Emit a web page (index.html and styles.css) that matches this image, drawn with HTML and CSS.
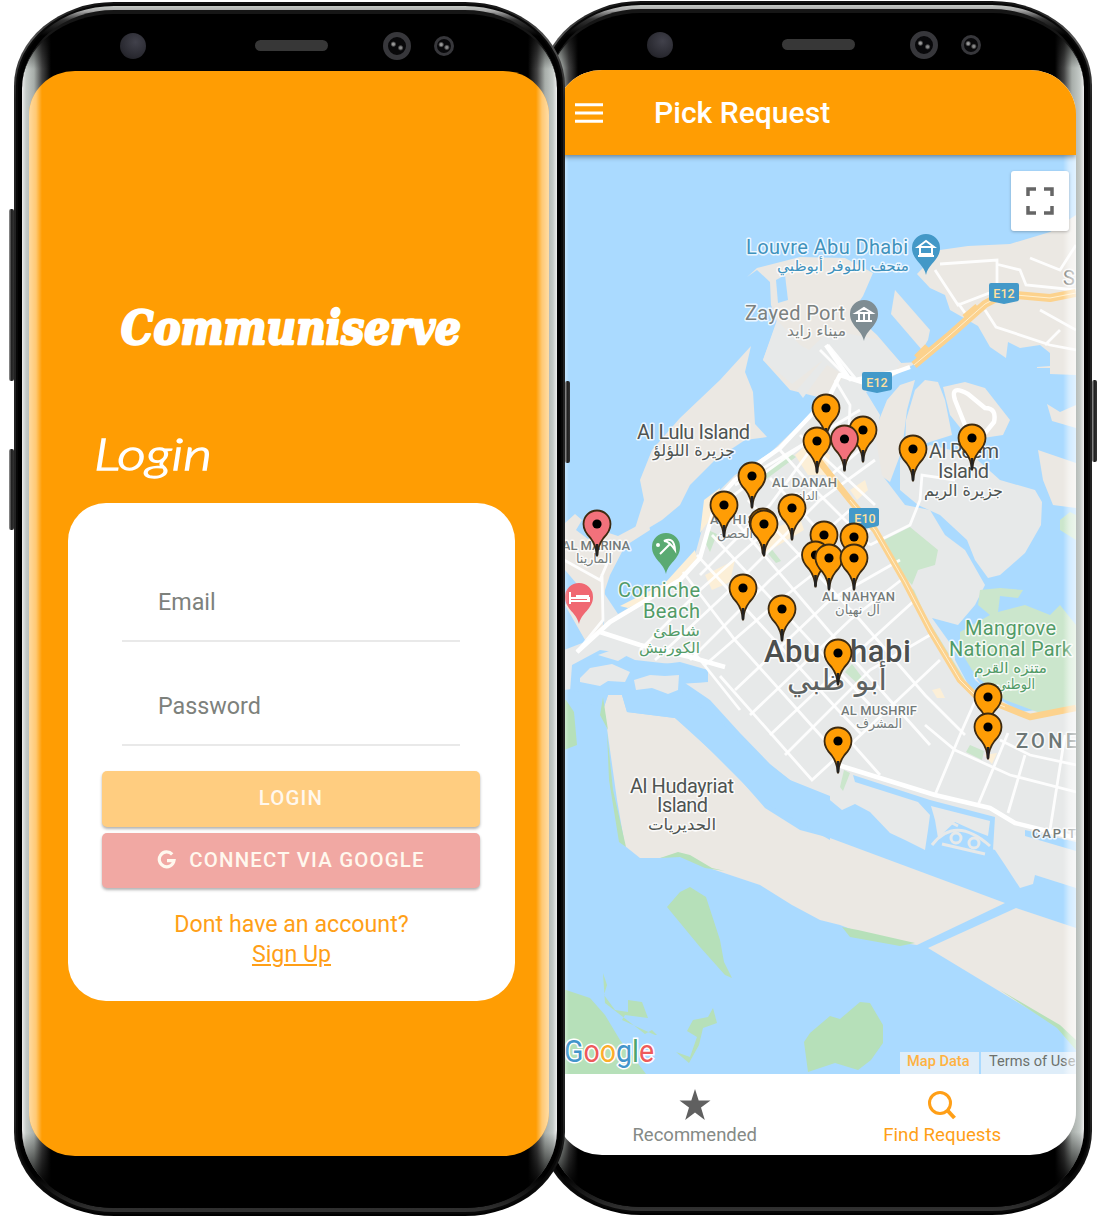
FILE: index.html
```html
<!DOCTYPE html>
<html lang="en">
<head>
<meta charset="utf-8">
<title>Communiserve</title>
<link rel="stylesheet" href="styles.css">
</head>
<body>
<main class="stage">
  <section class="phone phone-front">
    <i class="key key-volume"></i><i class="key key-assist"></i><i class="key key-power"></i>
    <div class="rim"><div class="glass">
      <div class="sensors"><i class="iris"></i><i class="speaker"></i><i class="camera"></i><i class="camera small"></i></div>
      <div class="screen login">
        <svg class="brand" width="350" height="60" viewBox="0 0 350 60"><text x="4" y="47" textLength="340" lengthAdjust="spacingAndGlyphs">Communiserve</text></svg>
        <svg class="heading" width="130" height="64" viewBox="0 0 130 64"><text x="2" y="42" textLength="118" lengthAdjust="spacingAndGlyphs">Login</text></svg>
        <form class="card">
          <label class="field">Email</label>
          <label class="field">Password</label>
          <button type="button" class="btn btn-login">LOGIN</button>
          <button type="button" class="btn btn-google">
            <svg width="19" height="20" viewBox="0 0 19 20"><path d="M15.2 4.4A7.4 7.4 0 1 0 17 10.6H10" fill="none" stroke="currentColor" stroke-width="3.2"/></svg>
            <span>CONNECT VIA GOOGLE</span>
          </button>
          <p class="signup">Dont have an account?<br><a>Sign Up</a></p>
        </form>
      </div>
      <div class="chin"></div>
    </div></div>
  </section>

  <section class="phone phone-back">
    <i class="key key-power"></i>
    <div class="rim"><div class="glass">
      <div class="sensors"><i class="iris"></i><i class="speaker"></i><i class="camera"></i><i class="camera small"></i></div>
      <div class="screen finder">
        <header class="appbar">
          <svg width="28" height="20" viewBox="0 0 28 20"><path d="M0 1.8H28M0 10H28M0 18.2H28" stroke="#fff" stroke-width="3"/></svg>
          <h1>Pick Request</h1>
        </header>
        <div class="map">
          <svg width="520" height="919" viewBox="556 155 520 919">
            <defs>
              <g id="pin"><path d="M0 32.5C-.6 24-2.600 19-6.500 14C-10.500 10-13.500 6-13.500 0A13.500 13.500 0 0 1 13.500 0C13.500 6 10.500 10 6.500 14C2.600 19 .6 24 0 32.500Z" stroke="#3d2a10" stroke-width="1.800"/><path d="M0 20V31.500" stroke="#222" stroke-width="2.600"/><circle r="4.600" fill="#000"/></g>
              <path id="poi" d="M0 27C-2 16-14 12-14 0A14 14 0 0 1 14 0C14 12 2 16 0 27Z"/>
              <path id="shield" d="M-15-8Q-15-10-13-10H13Q15-10 15-8V6Q15 8 12 8.500L0 11L-12 8.500Q-15 8-15 6Z"/>
            </defs>
            <rect x="556" y="155" width="520" height="919" fill="#aadaff"/>

            <!-- islands and mainland -->
            <g class="sand">
              <path d="M747 277L757 268L800 257L845 258L873 273L863 296L852 312L877 335L901 363L918 362L890 378L850 380L830 400L790 390L763 360L777 322L771 305L770 282L757 270Z"/>
              <path d="M895 290L930 330L928 340L922 350L891 314Z"/>
              <path d="M917 274L940 250L968 246L1010 244L1050 232L1076 215V375L1050 374V368H1037V367L1050 366V353L1040 345L1020 348L1008 342L1006 358L990 347L978 326L950 310L945 295L930 288Z"/>
              <path d="M751 346L745 372L753 392L755 424L767 437L745 440L715 460L690 485L680 505L662 520L632 538L644 500L640 480L652 450L680 418L720 380Z"/>
              <path d="M875 450L877 425L887 400L900 385L915 380L907 410L902 450L890 482L880 475Z"/>
              <path d="M915 390L925 380L938 382L945 400L952 435L905 450L906 420Z"/>
              <path d="M943 387L965 382L985 388L1010 420L1003 435L970 440L950 415Z"/>
              <path d="M1047 404L1060 412L1076 405V428L1052 421Z"/>
              <path d="M1038 450L1076 463V508L1053 505L1043 480Z"/>
              <path d="M604 707L608 695L622 695L627 712L675 718L730 768L765 808L800 830L830 838L1005 903L917 945L880 940L840 925L820 920L792 905L760 885L700 865L680 855L660 858L640 858L625 846L617 800Z"/>
              <path d="M928 948L1016 908L1076 928V1042L1060 1028Z"/>
              <path d="M565 523L575 514L582 520L576 530L588 539L600 530L618 536L648 520L650 530L625 546L610 575L605 590L603 630L585 640L565 605L582 590L565 570Z"/>
            </g>
            <g class="urban">
              <path d="M809 350L830 330L880 340L901 363L890 378L866 392L880 415L876 440L882 475L905 505L930 510L945 535L965 550L985 585L975 605L958 625L932 618L955 650L985 690L1020 712L1076 705V888L1035 875L1033 884L1020 888L1005 865L995 850L955 838L925 850L905 840L890 833L870 812L855 804L842 810L825 796L795 784L770 764L740 733L710 700L685 683L705 682L708 670L680 662L655 665L640 680L600 680L580 680L564 700V650L590 640L604 628L602 590L618 614L660 590L695 555L710 500L735 475L770 453L825 400L845 375L827 365L803 398L797 390L823 360L792 384L763 360L777 320L800 345Z"/>
              <path d="M900 460L930 445L972 455L1000 480L1035 490L1042 502L1041 525L1025 553L1000 575L988 578L975 560L967 540L940 515L918 505L900 490Z"/>
            </g>

            <!-- inlets and lagoons -->
            <g class="water">
              <path d="M776 280L785 275L788 300L778 303Z"/>
              <path d="M564 690L600 685L630 690L645 680L685 684L682 695L720 720L742 745L790 780L830 796V840L760 800L690 730L675 718L627 712L622 695L608 695L604 707L564 700Z"/>
              <path d="M572 665L600 650L620 653L635 660L680 665L708 672L708 682L680 684L660 675L640 690L610 690L570 692Z"/>
              <path d="M853 775L930 800L995 817L993 850L955 848L925 850L928 830L930 815L918 802L855 782Z"/>
              <path d="M1025 830L1076 842V851L1025 836Z"/>
              <path d="M954 639L966 655L975 680L1000 700L970 688L955 660Z"/>
            </g>
            <g class="urban">
              <path d="M580 678L590 668L612 664L630 672L625 682L608 681L600 686L580 682ZM634 680L650 675L665 676L679 675L678 690L668 694L652 688L636 690ZM598 655L612 650L628 655L618 661Z"/>
              <path d="M931 806L990 821L988 836L975 831L955 822L938 838L935 820Z"/>
            </g>
            <path d="M932 845Q955 815 990 846M942 844L985 854M942 818L958 826" class="islet"/>
            <circle cx="956" cy="838" r="5" class="islet"/><circle cx="974" cy="843" r="5" class="islet"/>

            <!-- parks -->
            <g class="park">
              <path d="M884 540L910 527L938 550L935 565L918 570L912 585L903 575Z"/>
              <path d="M980 590L1000 588L1023 590L1018 598L1000 596L998 612L1025 605L1050 615L1060 605L1076 625V705L1040 713L1005 700L975 675L960 650L960 632L990 615L978 605Z"/>
              <path d="M903 580L914 590L925 615L965 680L955 675L927 630Z"/>
              <path d="M764 475L790 453L796 457L765 480ZM705 542L708 530L717 534L710 552Z"/>
              <path d="M765 550L770 547L781 561L776 563ZM845 672L852 664L864 680L858 684ZM840 787L844 770L850 773L843 791ZM966 752L970 745L984 751L982 760Z"/>
              <path d="M1060 520L1070 512L1076 515V540L1060 530Z"/>
            </g>
            <g class="marsh">
              <path d="M556 700H566L574 712L577 745L564 750H556ZM603 697L608 730L600 715Z"/>
              <path d="M607 732L613 790L626 847L619 842L609 780Z"/>
              <path d="M667 907L680 892L690 887L706 897L720 940L724 962L732 978L725 975L700 947Z"/>
              <path d="M556 990H566L590 998L605 1015L620 1040L646 1074H556Z"/>
              <path d="M603 973L607 985L604 995L615 1010L628 1012L628 1000L642 1002L648 1018L625 1015L622 1020L655 1035L657 1035L652 1030L645 1034L605 1003Z"/>
              <path d="M687 1031L693 1020L708 1017L713 1008L717 1023L703 1028L699 1045L689 1063L676 1052L690 1057L697 1037Z"/>
              <path d="M804 1042L810 1033L830 1016L840 1019L860 1002L870 1003L883 1025V1043L871 1060L858 1070L835 1063L808 1072Z"/>
              <path d="M660 858L678 852L690 855L712 868L725 871L705 868L680 857ZM842 927L858 930L915 943L900 946L850 937ZM1000 990L1060 1025L1076 1040V1050L1057 1028Z"/>
            </g>
            <g fill="#fcefd7"><path d="M620 606L665 583L695 550L697 558L668 590L628 608ZM705 575L735 560L730 582L712 590ZM757 535L800 518L804 530L762 555ZM795 455L810 442L830 455L827 475L808 475ZM704 500L720 488L713 515L700 533ZM850 490L865 480L868 490L857 500ZM984 755L997 753L992 764ZM932 690L940 688L945 698L937 698Z"/></g>

            <!-- streets -->
            <g class="street">
              <path d="M683 572L735 640L838 755M697 555L838 710L862 735M712 535L870 705M730 515L845 650L930 745M748 500L860 620L925 695L965 735M770 478L860 575M780 450L815 490L870 545M690 647L740 710M720 676L812 780L850 745L940 660M800 435L875 505"/>
              <path d="M640 650L700 590L790 510L860 450M655 660L730 590L820 500L875 460M690 660L770 580L850 510M705 665L780 600L870 530M735 690L830 600L900 560M750 715L850 620L905 577M770 735L860 650L915 600M785 755L870 670L930 635M700 575L770 505L825 430"/>
              <path d="M735 485L860 410M720 505L810 440M835 380L850 405L848 450M820 350L850 380L900 370M828 345L855 378"/>
              <path d="M935 795L960 735L980 690M978 805L1008 733M1008 813L1025 755M1050 830L1065 735M925 725L955 750L1010 775L1076 792M1000 740L1030 755L1076 765M840 730L880 775"/>
              <path d="M870 545L910 525L920 500L922 475L955 480M602 574L603 620L577 652M564 560L600 580L612 552"/>
              <path d="M940 264L997 260V290L958 305L935 270M958 303L970 320M996 264L1020 270L1026 285L1076 290M1030 258L1060 270L1076 245M985 310L996 327L1050 345L1076 350M1076 330L1040 310M1045 345L1060 330"/>
            </g>
            <path class="road" d="M577 652L610 622L680 580L700 558L708 530L717 500L735 480L780 448L830 395L840 375L865 383L910 367M600 632L640 645L690 657L725 667M838 765L935 795L990 808L1015 823L1076 838M826 345L848 377M967 430L955 400Q950 384 968 394L985 408Q997 408 994 422L985 433"/>
            <path class="highway" d="M812 452L850 500L875 530L905 582L930 630L960 680L975 695L1005 707L1030 717L1076 708"/>
            <path class="highway wide" d="M914 365L950 335L985 304L1004 294L1050 298L1076 293M917 358L928 347M965 318L978 307"/>
            <path class="median" d="M914 365L950 335L985 304L1004 294L1050 298L1076 293M850 500L875 530L905 582L930 630L960 680L975 695L1005 707"/>

            <!-- points of interest -->
            <use href="#poi" x="926" y="248" fill="#4398c7"/><path d="M918 247L926 241L934 247ZM920 248V254H932V248M918 256H934" class="glyph"/>
            <use href="#poi" x="864" y="314" fill="#7f8d93"/><path d="M856 313L864 308L872 313ZM859 314V320M864 314V320M869 314V320M856 321H872" class="glyph"/>
            <use href="#poi" x="666" y="547" fill="#5aaa72"/><path d="M660 554L670 544M664 541Q674 536 675 550Q669 541 664 541Z" class="glyph"/><circle cx="658" cy="545" r="2" fill="#fff"/>
            <use href="#poi" x="579" y="597" fill="#f06872"/><path d="M570 592V604M570 601H589V598H571M576 596H588V601" class="glyph"/>

            <g class="route"><use href="#shield" x="1004" y="293"/><use href="#shield" x="877" y="382"/><use href="#shield" x="864" y="518"/></g>
            <g class="route-no"><text x="1004" y="298">E12</text><text x="877" y="387">E12</text><text x="865" y="523">E10</text></g>

            <!-- place names -->
            <g class="label" font-size="20">
              <g fill="#3f92bd"><text x="746" y="254" textLength="162">Louvre Abu Dhabi</text><text class="ar" x="777" y="271" textLength="132" lengthAdjust="spacingAndGlyphs" font-size="15">متحف اللوفر أبوظبي</text></g>
              <g fill="#7b8180"><text x="745" y="320" textLength="100">Zayed Port</text><text class="ar" x="787" y="336" textLength="59" lengthAdjust="spacingAndGlyphs" font-size="15">ميناء زايد</text></g>
              <g fill="#4e5452">
                <text x="637" y="439" textLength="113">Al Lulu Island</text><text class="ar" x="653" y="456" textLength="82" lengthAdjust="spacingAndGlyphs" font-size="16">جزيرة اللؤلؤ</text>
                <text x="929" y="458" textLength="70">Al Reem</text><text x="938" y="478" textLength="51">Island</text><text class="ar" x="924" y="496" textLength="79" lengthAdjust="spacingAndGlyphs" font-size="16">جزيرة الريم</text>
                <text x="630" y="793" textLength="104">Al Hudayriat</text><text x="657" y="812" textLength="51">Island</text><text class="ar" x="648" y="830" textLength="68" lengthAdjust="spacingAndGlyphs" font-size="16">الحديريات</text>
              </g>
              <g fill="#529b67"><text x="618" y="597" textLength="82">Corniche</text><text x="643" y="618" textLength="57">Beach</text><text class="ar" x="653" y="636" textLength="47" lengthAdjust="spacingAndGlyphs" font-size="15">شاطئ</text><text class="ar" x="639" y="653" textLength="61" lengthAdjust="spacingAndGlyphs" font-size="15">الكورنيش</text>
                <text x="965" y="635" textLength="91">Mangrove</text><text x="949" y="656" textLength="123">National Park</text><text class="ar" x="974" y="673" textLength="73" lengthAdjust="spacingAndGlyphs" font-size="15">متنزه القرم</text><text class="ar" x="996" y="689" textLength="39" lengthAdjust="spacingAndGlyphs" font-size="15">الوطني</text></g>
              <g fill="#747b7a" font-size="13" font-weight="500">
                <text x="772" y="487" textLength="65">AL DANAH</text><text class="ar" x="793" y="500" textLength="25" lengthAdjust="spacingAndGlyphs" font-size="12">الدانة</text>
                <text x="710" y="524" textLength="56">AL HISN</text><text class="ar" x="717" y="538" textLength="36" lengthAdjust="spacingAndGlyphs" font-size="13">الحصن</text>
                <text x="562" y="550" textLength="68">AL MARINA</text><text class="ar" x="576" y="563" textLength="36" lengthAdjust="spacingAndGlyphs" font-size="13">المارينا</text>
                <text x="822" y="601" textLength="73">AL NAHYAN</text><text class="ar" x="835" y="614" textLength="45" lengthAdjust="spacingAndGlyphs" font-size="13">آل نهيان</text>
                <text x="841" y="715" textLength="76">AL MUSHRIF</text><text class="ar" x="856" y="728" textLength="46" lengthAdjust="spacingAndGlyphs" font-size="13">المشرف</text>
                <text x="1032" y="838" textLength="44">CAPIT</text>
              </g>
              <text x="1063" y="285" fill="#7b8180">S</text>
              <text x="1016" y="748" font-size="20" font-weight="500" fill="#6d7776" textLength="61">ZONE</text>
              <text x="764" y="662" font-size="31" font-weight="500" fill="#4c4f4e" textLength="147">Abu Dhabi</text>
              <text class="ar" x="787" y="690" font-size="29" fill="#5e6261" textLength="100" lengthAdjust="spacingAndGlyphs">أبو ظبي</text>
            </g>

            <!-- request pins -->
            <g fill="#ff9d05">
              <use href="#pin" x="826" y="408"/><use href="#pin" x="863" y="430"/><use href="#pin" x="972" y="438"/>
              <use href="#pin" x="844.500" y="439" fill="#f2717b"/><use href="#pin" x="817" y="441"/><use href="#pin" x="913" y="449"/>
              <use href="#pin" x="752" y="476"/><use href="#pin" x="724" y="505"/><use href="#pin" x="792" y="508"/>
              <use href="#pin" x="763" y="522"/><use href="#pin" x="764" y="524"/><use href="#pin" x="597" y="524" fill="#f2717b"/>
              <use href="#pin" x="824" y="535"/><use href="#pin" x="854" y="537"/><use href="#pin" x="815.500" y="555"/><use href="#pin" x="829" y="558"/><use href="#pin" x="854" y="558"/>
              <use href="#pin" x="743" y="588"/><use href="#pin" x="782" y="609"/><use href="#pin" x="838" y="653"/>
              <use href="#pin" x="988" y="697"/><use href="#pin" x="988" y="727"/><use href="#pin" x="838" y="741"/>
            </g>
            <text class="google" x="564" y="1062" textLength="90" lengthAdjust="spacingAndGlyphs"><tspan fill="#4395cb">G</tspan><tspan fill="#ee5a5a">o</tspan><tspan fill="#fbae2c">o</tspan><tspan fill="#4395cb">g</tspan><tspan fill="#4fa56b">l</tspan><tspan fill="#ee5a5a">e</tspan></text>
          </svg>
          <div class="fullscreen"><svg width="28" height="28" viewBox="0 0 28 28"><path d="M2 9V2H10M18 2H26V9M26 19V26H18M10 26H2V19" fill="none" stroke="#666" stroke-width="3.500"/></svg></div>
          <div class="legal"><span class="data">Map Data</span><span class="terms">Terms of Use</span></div>
        </div>
        <nav class="tabs">
          <a class="tab"><svg width="32" height="32" viewBox="0 0 32 32"><path d="M16 0L19.700 11.500H31.500L22 18.600L25.800 31L16 23.600L6.200 31L10 18.600L.5 11.500H12.300Z" fill="#606060"/></svg><span>Recommended</span></a>
          <a class="tab active"><svg width="32" height="32" viewBox="0 0 32 32"><circle cx="14" cy="14" r="10.500" fill="none" stroke="currentColor" stroke-width="3"/><path d="M21.500 21.500L28.500 29" stroke="currentColor" stroke-width="4"/></svg><span>Find Requests</span></a>
        </nav>
      </div>
      <div class="chin"></div>
    </div></div>
  </section>
</main>
</body>
</html>
```
FILE: styles.css
```css
* { box-sizing: border-box; }
body { margin: 0; background: #fff; font-family: Roboto, "Liberation Sans", sans-serif; }
.stage { display: flex; width: 1109px; height: 1228px; padding: 2px 0 0 14px; overflow: hidden; }
.phone { position: relative; flex: none; width: 551px; height: 1214px; padding: 2px; border-radius: 100px / 84px; background: linear-gradient(#111, #555 3%, #222 8%, #222 92%, #000); }
.phone-front { z-index: 2; }
.phone-back { margin: -1px 0 0 -24px; }
.rim { height: 100%; padding: 4px; border-radius: 98px / 82px; background: linear-gradient(#c4c8c4 0, #aaa 5px, #333 14px, #000 30px, #000 97%, #333); border: 2px solid #080808; }
.glass { display: flex; flex-direction: column; height: 100%; padding: 0 7px; border-radius: 92px / 78px; border-top: 4px solid #161616; background: linear-gradient(#000 10px, transparent 55px, transparent calc(100% - 75px), #000 calc(100% - 20px)), linear-gradient(90deg, #eee 0, #c5cbc8 4px, #a8aeaa 12px, #444 20px, #000 29px, #000 calc(100% - 29px), #444 calc(100% - 20px), #a8aeaa calc(100% - 12px), #c5cbc8 calc(100% - 4px), #eee 100%); }
.sensors { flex: none; height: 57px; display: flex; align-items: center; padding: 6px 0 0 91px; }
.iris { width: 26px; height: 26px; border-radius: 50%; background: radial-gradient(circle at 60% 35%, #41414b, #292930 65%, #17171b); }
.speaker { width: 73px; height: 11px; margin-left: 109px; border-radius: 6px; background: #373737; }
.camera { width: 28px; height: 28px; margin-left: 55px; border-radius: 50%; border: 5px solid #37373b; background: radial-gradient(circle at 30% 40%, #999 0 1px, transparent 3px), radial-gradient(circle at 70% 60%, #888 0 1px, transparent 3px), #08080a; }
.camera.small { width: 20px; height: 20px; margin-left: 23px; border-width: 3px; }
.chin { flex: 1; }
.screen { position: relative; flex: none; width: 520px; height: 1085px; border-radius: 46px / 44px; overflow: hidden; }
.screen::after { content: ""; position: absolute; inset: 0; pointer-events: none; background: linear-gradient(90deg, rgba(255,255,255,.62), rgba(255,255,255,.45) 7px, transparent 13px, transparent calc(100% - 13px), rgba(255,255,255,.45) calc(100% - 7px), rgba(255,255,255,.65)); }
.key { position: absolute; width: 5px; background: linear-gradient(90deg, #999, #222 50%, #333); border-radius: 2px; }
.key-volume { left: -5px; top: 207px; height: 172px; }
.key-assist { left: -5px; top: 447px; height: 81px; }
.key-power { right: -5px; top: 379px; height: 82px; }

.login { display: flex; flex-direction: column; background: #ff9d03; }
.brand { margin: 226px 0 0 88px; flex: none; overflow: visible; }
.brand text { font: italic bold 47px "DejaVu Serif", serif; fill: #fff; stroke: #fff; stroke-width: 2.600px; stroke-linejoin: round; }
.heading { margin: 71px 0 0 63px; flex: none; overflow: visible; }
.heading text { font: italic 300 43px Lato, sans-serif; fill: #fff; stroke: #fff; stroke-width: 1.300px; }
.card { display: flex; flex-direction: column; width: 447px; height: 498px; margin: 11px 0 0 39px; padding: 77px 34px 0; border-radius: 38px; background: #fff; }
.field { height: 62px; margin: 0 21px 42px 20px; padding: 9px 36px 0; border-bottom: 2px solid #e9e9e9; color: #7d817c; font-size: 23.300px; line-height: 27px; }
.field + .field { margin-bottom: 25px; }
.btn { display: flex; justify-content: center; align-items: center; flex: none; width: 378px; height: 56px; padding: 0 0 2px; border: 0; border-radius: 5px; color: #fff8ee; font: 500 20.400px Roboto, sans-serif; letter-spacing: 1.200px; box-shadow: 0 2px 3px rgba(0,0,0,.3); }
.btn-login { background: #ffcd80; margin-bottom: 6px; }
.btn-google { background: #f1a8a3; gap: 13px; height: 55px; }
.signup { margin: 21px 0 0; text-align: center; color: #ff9f17; font-size: 23.200px; line-height: 30px; }
.signup a { text-decoration: underline; }

.finder { display: flex; flex-direction: column; background: #fff; }
.appbar { position: relative; z-index: 1; display: flex; align-items: center; gap: 51px; flex: none; height: 85px; padding-left: 19px; background: #ff9d03; box-shadow: 0 2px 5px rgba(0,0,0,.4); }
.appbar h1 { margin: 0; color: #fff; font-size: 30.100px; font-weight: 500; }
.map { position: relative; flex: none; height: 919px; }
.map > svg { display: block; }
.fullscreen { position: absolute; top: 16px; right: 7px; display: grid; place-items: center; width: 58px; height: 60px; border-radius: 3px; background: #fff; box-shadow: 0 1px 3px rgba(0,0,0,.25); z-index: 2; }
.legal { position: absolute; right: 0; bottom: 0; display: flex; gap: 2px; height: 22px; font-size: 14.600px; line-height: 19px; white-space: nowrap; font-weight: 500; }
.legal span { background: rgba(232,240,248,.85); }
.data { width: 79px; padding-left: 7px; color: #ffb241; }
.terms { width: 95px; padding-left: 8px; color: #6c716c; font-weight: 400; }
.tabs { flex: 1; display: flex; padding: 0 10px 0 15px; }
.tab { flex: 1; display: flex; flex-direction: column; align-items: center; padding-top: 15px; color: #858a86; font-size: 18.500px; line-height: 24px; }
.tab span { margin-top: 2px; }
.tab.active { color: #ff9f17; font-size: 18.700px; }

.sand path { fill: #ebe8e3; }
.urban path { fill: #e7e9e9; }
.water path { fill: #aadaff; }
.park path { fill: #cbe6cc; }
.marsh path { fill: #b6e0b9; }
.islet { fill: none; stroke: #e7e9e9; stroke-width: 3; }
.street path { fill: none; stroke: #fff; stroke-width: 2.800; opacity: .9; }
.road { fill: none; stroke: #fff; stroke-width: 4.500; stroke-linejoin: round; }
.highway { fill: none; stroke: #fcd28d; stroke-width: 6.500; stroke-linejoin: round; }
.highway.wide { stroke-width: 8; }
.median { fill: none; stroke: #fff0cf; stroke-width: 1; }
.glyph { fill: none; stroke: #fff; stroke-width: 2; }
.route { fill: #4399c9; }
.route-no text { font: 500 12.500px Roboto, sans-serif; fill: #ffe0a0; text-anchor: middle; }
.label text { paint-order: stroke; stroke: rgba(255,255,255,.8); stroke-width: 3px; stroke-linejoin: round; }
.label .ar { font-family: "DejaVu Sans", sans-serif; font-weight: 400; }
.google { font: 400 31px Roboto, sans-serif; paint-order: stroke; stroke: #fff; stroke-width: 3px; }
```
